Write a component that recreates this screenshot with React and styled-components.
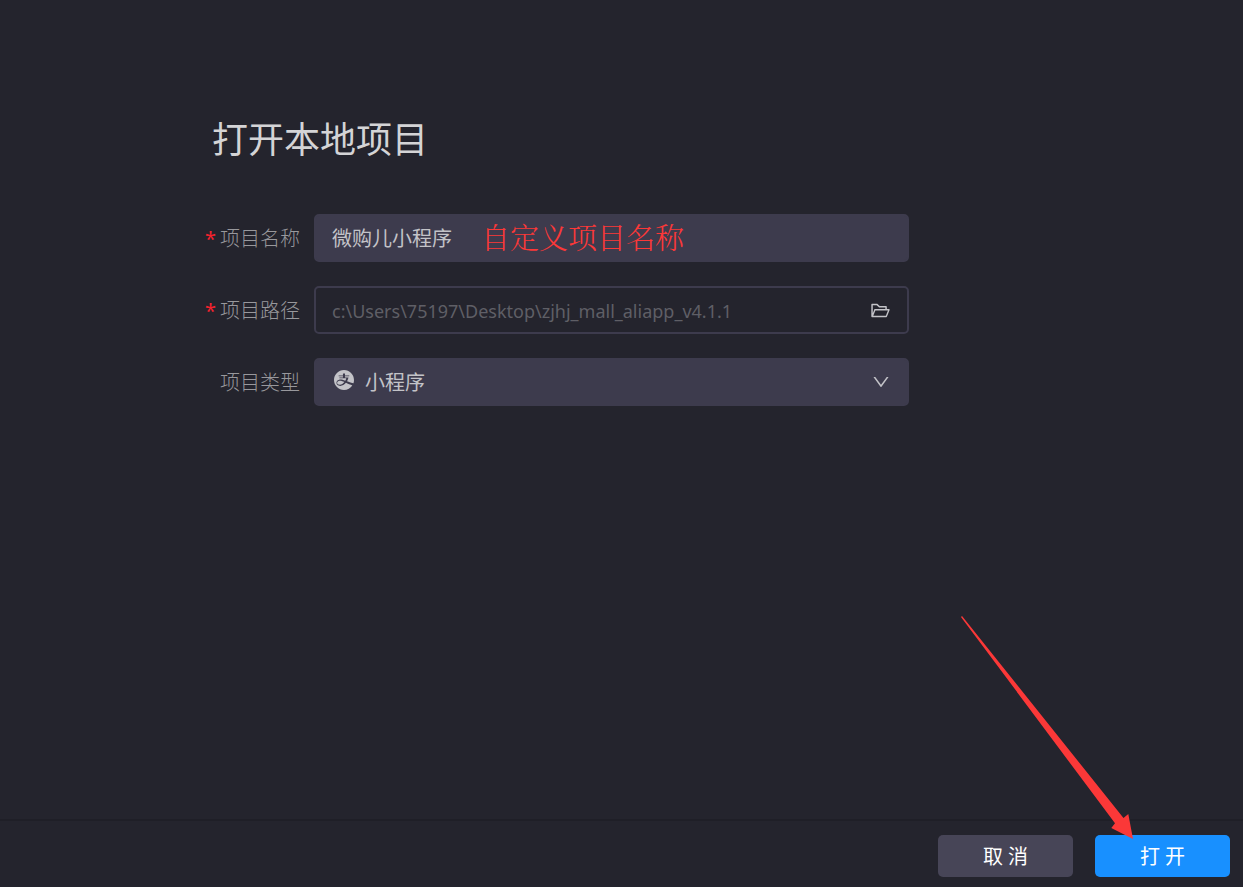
import React, { useState } from "react";
import styled, { createGlobalStyle } from "styled-components";
import { AiOutlineFolderOpen, AiOutlineDown } from "react-icons/ai";

const GlobalStyle = createGlobalStyle`
* {
  box-sizing: border-box;
}
body {
  margin: 0;
  background-color: #24242d;
}
body, input, select, button {
  font-family: "Noto Sans", "Noto Sans CJK SC", sans-serif;
}
`;

const Page = styled.div`
  display: flex;
  flex-direction: column;
  min-height: 100vh;
  background-color: #24242d;
`;

const Main = styled.main`
  flex: 1;
  padding: 112px 334px 32px 204px;
`;

const Title = styled.h1`
  margin: 0 0 46px 8px;
  font-size: 36px;
  font-weight: 400;
  line-height: 56px;
  color: #d4d4d6;
`;

const Form = styled.form`
  display: flex;
  flex-direction: column;
  gap: 24px;
`;

const Row = styled.div`
  display: flex;
  align-items: center;
`;

const Label = styled.label`
  flex: none;
  width: 110px;
  padding-top: 2px;
  padding-right: 14px;
  text-align: right;
  font-size: 20px;
  font-weight: 300;
  line-height: 28px;
  color: #98989c;
`;

const Required = styled.span`
  margin-right: 4px;
  font-weight: 400;
  color: #f5222d;
`;

//Box around every control, outlined when the value can't be typed in
const Field = styled.div`
  position: relative;
  display: flex;
  align-items: center;
  flex: 1;
  min-width: 0;
  height: 48px;
  padding: 0 16px;
  border: 2px solid #3d3b4d;
  border-radius: 5px;
  background-color: ${(props) => (props.$outlined ? "transparent" : "#3d3b4d")};
  color: #c3c3c8;
`;

const TextInput = styled.input`
  flex: 1;
  min-width: 0;
  padding: 2px 0 0;
  border: none;
  outline: none;
  background: transparent;
  font-size: ${(props) => (props.readOnly ? "18px" : "20px")};
  line-height: 28px;
  color: ${(props) => (props.readOnly ? "#5f5f66" : "#c3c3c8")};
`;

const TypeSelect = styled.select`
  flex: 1;
  min-width: 0;
  margin-left: 11px;
  padding: 2px 0 0;
  border: none;
  outline: none;
  appearance: none;
  background: transparent;
  font-size: 20px;
  line-height: 28px;
  color: #c3c3c8;
`;

const IconButton = styled.button`
  display: flex;
  padding: 0;
  border: none;
  background: transparent;
  color: #c3c3c8;
  cursor: pointer;
`;

const TypeIcon = styled.svg`
  flex: none;
  margin: 0 0 4px 2px;
`;

const Note = styled.span`
  position: absolute;
  left: 165px;
  top: 1px;
  font-family: "Noto Serif CJK SC", "Noto Sans CJK SC", serif;
  font-size: 29px;
  font-weight: 300;
  line-height: 40px;
  white-space: nowrap;
  color: #fb3838;
  pointer-events: none;
`;

const Footer = styled.footer`
  display: flex;
  justify-content: flex-end;
  gap: 22px;
  padding: 14px 13px 10px;
  border-top: 2px solid #1f1f27;
`;

const Button = styled.button`
  width: 135px;
  height: 42px;
  padding: 2px 0 0;
  border: none;
  border-radius: 5px;
  background-color: ${(props) => (props.$primary ? "#1890ff" : "#474557")};
  font-size: 20px;
  line-height: 28px;
  color: #ffffff;
  cursor: pointer;
`;

const OpenAction = styled.div`
  position: relative;
`;

const Arrow = styled.svg`
  position: absolute;
  right: 96px;
  bottom: 38px;
  pointer-events: none;
`;

const AlipayIcon = () => (
    <TypeIcon width="20" height="20" viewBox="64 64 896 896" fill="currentColor" aria-hidden="true">
        <path d="M308.6 545.7c-19.8 2-57.1 10.7-77.4 28.6-61 53-24.5 150 99 150 71.8 0 143.5-45.7 199.8-119-80.2-38.9-148.1-66.8-221.4-59.6zm460.5 67c100.1 33.4 154.7 43 166.7 44.8A445.9 445.9 0 0 0 960 512c0-247.4-200.6-448-448-448S64 264.6 64 512s200.6 448 448 448c155.9 0 293.2-79.7 373.5-200.5-75.6-29.8-213.6-85-286.8-120.1-69.9 85.7-160.1 137.8-253.7 137.8-158.4 0-212.1-138.1-137.2-229 16.3-19.8 44.2-38.7 87.3-49.4 67.5-16.5 175 10.3 275.7 43.4 18.1-33.3 33.4-69.9 44.7-108.9H305.1V402h160v-56.2H271.3v-31.3h193.8v-80.1s0-13.5 13.7-13.5H557v93.6h191.7v31.3H557.1V402h156.4c-15 61.1-37.7 117.4-66.2 166.8 47.5 17.1 90.1 33.3 121.8 43.9z" />
    </TypeIcon>
);

const App = () => {
    const [name, setName] = useState("微购儿小程序");

    return (
        <Page>
            <GlobalStyle />
            <Main>
                <Title>打开本地项目</Title>
                <Form id="project" onSubmit={(event) => event.preventDefault()}>
                    <Row>
                        <Label htmlFor="name"><Required>*</Required>项目名称</Label>
                        <Field>
                            <TextInput id="name" value={name} onChange={(event) => setName(event.target.value)} />
                            <Note>自定义项目名称</Note>
                        </Field>
                    </Row>
                    <Row>
                        <Label htmlFor="path"><Required>*</Required>项目路径</Label>
                        <Field $outlined>
                            <TextInput id="path" readOnly value={"c:\\Users\\75197\\Desktop\\zjhj_mall_aliapp_v4.1.1"} />
                            <IconButton type="button" aria-label="选择文件夹"><AiOutlineFolderOpen size={21} /></IconButton>
                        </Field>
                    </Row>
                    <Row>
                        <Label htmlFor="type">项目类型</Label>
                        <Field>
                            <AlipayIcon />
                            <TypeSelect id="type">
                                <option>小程序</option>
                            </TypeSelect>
                            <AiOutlineDown size={20} />
                        </Field>
                    </Row>
                </Form>
            </Main>
            <Footer>
                <Button type="button">取 消</Button>
                <OpenAction>
                    <Button $primary type="submit" form="project">打 开</Button>
                    <Arrow width="173" height="223" viewBox="0 0 173 223" aria-hidden="true">
                        <path d="M0 1 L1 0 L162.5 202 L167.3 198 L172 223 L150.3 212 L154 207.3 Z" fill="#fb3838" />
                    </Arrow>
                </OpenAction>
            </Footer>
        </Page>
    );
};

export default App;
